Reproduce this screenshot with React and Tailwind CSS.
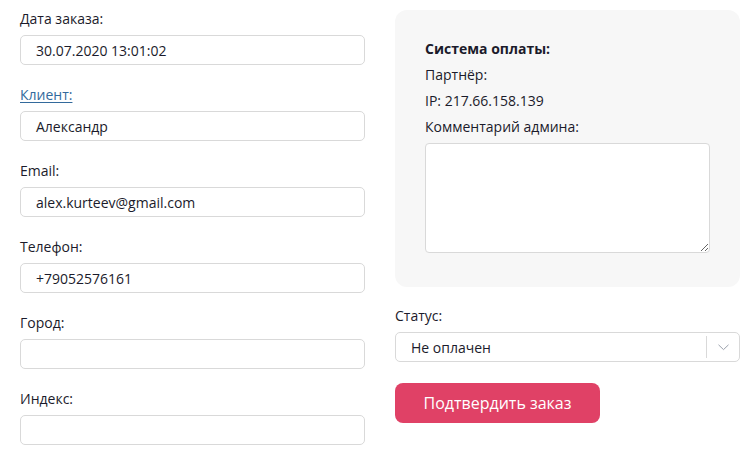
import React from "react";

const font = { fontFamily: '"Open Sans", "Noto Sans", sans-serif' };

function Field({ label, value, link }) {
  return (
    <div className="flex flex-col gap-[6px]">
      {link ? (
        <a className="h-5 leading-5 text-[14px] text-[#336a9c] underline underline-offset-2 w-fit" href="#">
          {label}
        </a>
      ) : (
        <div className="h-5 leading-5 text-[14px] text-[#1b1b2b]">{label}</div>
      )}
      <div className="h-[30px] border border-[#d9d9d9] rounded-[5px] bg-white px-[15px] flex items-center text-[14px] text-[#1b1b2b]">
        {value}
      </div>
    </div>
  );
}

export default function App() {
  return (
    <div className="w-[753px] h-[450px] bg-white overflow-hidden" style={font}>
      <div className="flex gap-[30px] pl-[20px] pt-[9px]">
        <div className="w-[345px] flex flex-col gap-[20px]">
          <Field label="Дата заказа:" value="30.07.2020 13:01:02" />
          <Field label="Клиент:" value="Александр" link />
          <Field label="Email:" value="alex.kurteev@gmail.com" />
          <Field label="Телефон:" value="+79052576161" />
          <Field label="Город:" value="" />
          <Field label="Индекс:" value="" />
        </div>
        <div className="w-[345px] flex flex-col pt-[1px]">
          <div className="bg-[#f7f7f7] rounded-[12px] px-[30px] pt-[29px] pb-[34px] flex flex-col text-[14px] text-[#1b1b2b]">
            <div className="leading-5 font-bold">Система оплаты:</div>
            <div className="leading-5 mt-[6px]">Партнёр:</div>
            <div className="leading-5 mt-[6px]">IP: 217.66.158.139</div>
            <div className="leading-5 mt-[6px]">Комментарий админа:</div>
            <textarea className="mt-[6px] h-[110px] w-full bg-white border border-[#d9d9d9] rounded-[4px] outline-none" />
          </div>
          <div className="mt-[19px] h-5 leading-5 text-[14px] text-[#1b1b2b]">Статус:</div>
          <div className="mt-[6px] h-[30px] border border-[#d9d9d9] rounded-[5px] bg-white flex items-center text-[14px] text-[#1b1b2b]">
            <div className="flex-1 pl-[15px]">Не оплачен</div>
            <div className="w-px h-[22px] bg-[#d9d9d9]" />
            <div className="w-[32px] flex items-center justify-center">
              <svg width="11" height="7" viewBox="0 0 11 7" fill="none">
                <path d="M0.5 0.8 L5.5 5.6 L10.5 0.8" stroke="#9aa0ab" strokeWidth="1" />
              </svg>
            </div>
          </div>
          <button className="mt-[21px] w-[205px] h-[40px] rounded-[8px] bg-[#e04166] text-white text-[16px] leading-none">
            Подтвердить заказ
          </button>
        </div>
      </div>
    </div>
  );
}
